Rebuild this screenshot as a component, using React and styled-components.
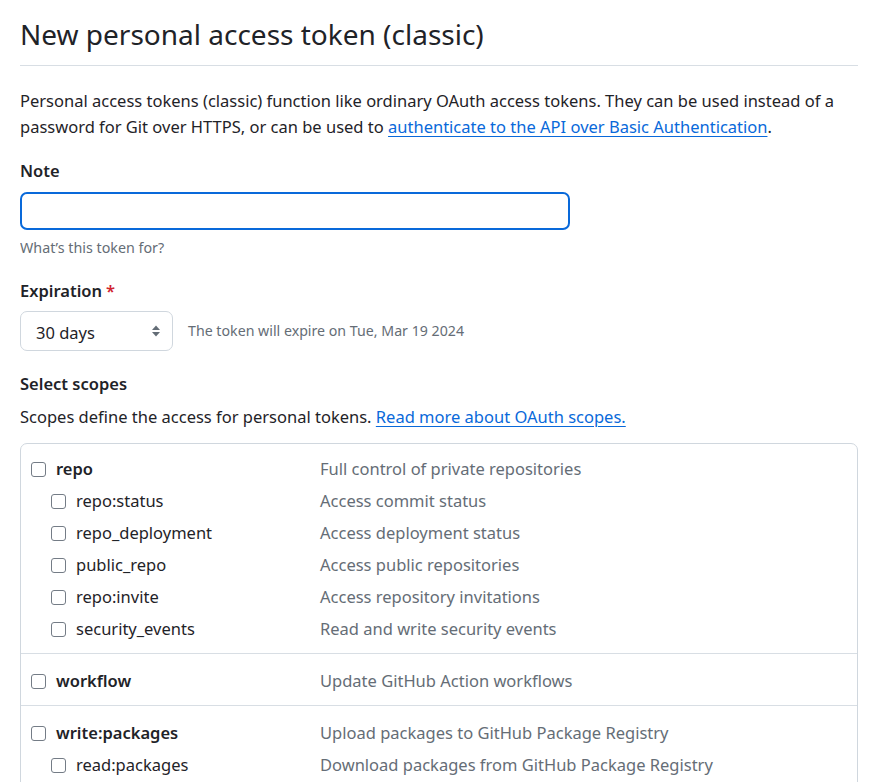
import React from "react";
import styled, { createGlobalStyle } from "styled-components";

const Global = createGlobalStyle`
  html, body { margin: 0; padding: 0; background: #ffffff; }
  body {
    font-family: "Noto Sans", "Open Sans", sans-serif;
    color: #1f2328;
    font-size: 16.5px;
    line-height: 1.5;
  }
  * { box-sizing: border-box; }
`;

const Page = styled.div`
  width: 838px;
  margin-left: 20px;
  overflow: hidden;
`;

const Title = styled.h1`
  margin: 0;
  padding: 16px 0 13px;
  font-size: 28px;
  line-height: 36px;
  font-weight: 400;
  border-bottom: 1px solid #d8dee4;
`;

const Lead = styled.p`
  margin: 22px 0 0;
  line-height: 26px;
`;

const Link = styled.a`
  color: #0969da;
  text-decoration: underline;
  text-underline-offset: 3px;
`;

const Field = styled.div`
  margin-top: ${(p) => p.$top || 0}px;
`;

const Label = styled.div`
  font-weight: 600;
  line-height: 26px;
`;

const Required = styled.span`
  color: #d1242f;
  margin-left: 4px;
`;

const TextInput = styled.div`
  margin-top: 8px;
  width: 550px;
  height: 38px;
  border: 2px solid #0969da;
  border-radius: 7px;
  background: #fff;
`;

const Note = styled.div`
  margin-top: 7px;
  font-size: 14.3px;
  line-height: 22px;
  color: #656d76;
`;

const SelectRow = styled.div`
  margin-top: 7px;
  display: flex;
  align-items: center;
  gap: 15px;
`;

const Select = styled.div`
  width: 153px;
  height: 40px;
  border: 1px solid #d0d7de;
  border-radius: 7px;
  background: #fff;
  display: flex;
  align-items: center;
  justify-content: space-between;
  padding: 0 10px 0 15px;
  font-size: 16.5px;
`;

const SelectText = styled.span`
  line-height: 20px;
  padding-top: 3px;
`;

const Aside = styled.span`
  font-size: 14.2px;
  color: #656d76;
  line-height: 20px;
`;

const Intro = styled.p`
  margin: 7px 0 0;
  line-height: 26px;
`;

const Box = styled.div`
  margin-top: 13px;
  border: 1px solid #d0d7de;
  border-radius: 7px;
`;

const Group = styled.div`
  padding: ${(p) => (p.$first ? "9px" : "11px")} 0 8px;
  & + & {
    border-top: 1px solid #d8dee4;
  }
`;

const Row = styled.div`
  display: flex;
  align-items: center;
  height: 32px;
`;

const NameCell = styled.label`
  width: 299px;
  flex: none;
  display: flex;
  align-items: center;
  gap: 10px;
  padding-left: ${(p) => (p.$sub ? 30 : 10)}px;
  font-weight: ${(p) => (p.$sub ? 400 : 600)};
`;

const Check = styled.span`
  width: 15px;
  height: 15px;
  flex: none;
  border: 1px solid #747c86;
  border-radius: 3px;
  background: #fff;
`;

const Desc = styled.span`
  color: #656d76;
`;

const SortIcon = () => (
  <svg width="12" height="16" viewBox="0 0 12 16" aria-hidden="true">
    <path d="M6 2.5 L10 7 H2 Z" fill="#636c76" />
    <path d="M6 13.5 L10 9 H2 Z" fill="#636c76" />
  </svg>
);

const groups = [
  {
    name: "repo",
    desc: "Full control of private repositories",
    subs: [
      ["repo:status", "Access commit status"],
      ["repo_deployment", "Access deployment status"],
      ["public_repo", "Access public repositories"],
      ["repo:invite", "Access repository invitations"],
      ["security_events", "Read and write security events"],
    ],
  },
  { name: "workflow", desc: "Update GitHub Action workflows", subs: [] },
  {
    name: "write:packages",
    desc: "Upload packages to GitHub Package Registry",
    subs: [["read:packages", "Download packages from GitHub Package Registry"]],
  },
];

export default function App() {
  return (
    <>
      <Global />
      <Page>
        <Title>New personal access token (classic)</Title>
        <Lead>
          Personal access tokens (classic) function like ordinary OAuth access tokens. They can be used instead of a
          password for Git over HTTPS, or can be used to{" "}
          <Link href="#">authenticate to the API over Basic Authentication</Link>.
        </Lead>

        <Field $top={18}>
          <Label>Note</Label>
          <TextInput />
          <Note>What’s this token for?</Note>
        </Field>

        <Field $top={19}>
          <Label>
            Expiration<Required>*</Required>
          </Label>
          <SelectRow>
            <Select>
              <SelectText>30 days</SelectText>
              <SortIcon />
            </Select>
            <Aside>The token will expire on Tue, Mar 19 2024</Aside>
          </SelectRow>
        </Field>

        <Field $top={20}>
          <Label>Select scopes</Label>
          <Intro>
            Scopes define the access for personal tokens.{" "}
            <Link href="#">Read more about OAuth scopes.</Link>
          </Intro>
          <Box>
            {groups.map((g, i) => (
              <Group key={g.name} $first={i === 0}>
                <Row>
                  <NameCell>
                    <Check />
                    {g.name}
                  </NameCell>
                  <Desc>{g.desc}</Desc>
                </Row>
                {g.subs.map(([n, d]) => (
                  <Row key={n}>
                    <NameCell $sub>
                      <Check />
                      {n}
                    </NameCell>
                    <Desc>{d}</Desc>
                  </Row>
                ))}
              </Group>
            ))}
          </Box>
        </Field>
      </Page>
    </>
  );
}
